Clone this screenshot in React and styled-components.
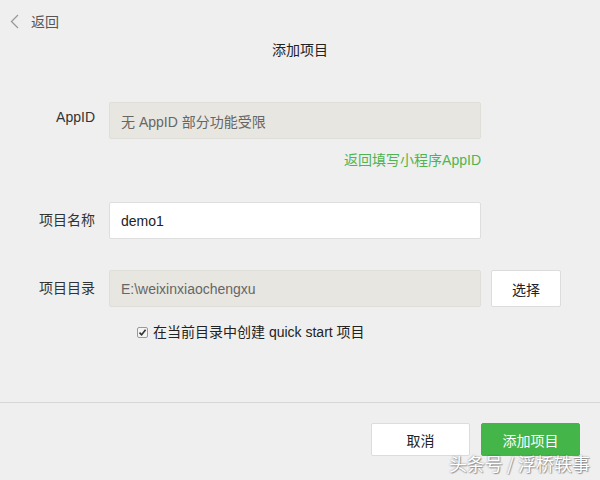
import React from 'react'
import styled, { createGlobalStyle } from 'styled-components'

const GlobalStyle = createGlobalStyle`
  html, body {
    margin: 0;
    padding: 0;
    background: #efefef;
  }
  body {
    font-family: "Liberation Sans", "Noto Sans CJK SC", sans-serif;
    font-size: 14px;
    color: #333;
  }
`

const Page = styled.div`
  position: relative;
  width: 600px;
  height: 480px;
  overflow: hidden;
  background: #efefef;
`

const BackLink = styled.div`
  display: flex;
  align-items: center;
  gap: 12px;
  padding: 11px 0 0 10px;
  height: 20px;
  color: #555;
  cursor: pointer;
`

const Title = styled.div`
  margin-top: 9px;
  line-height: 20px;
  text-align: center;
  color: #222;
`

const Form = styled.div`
  display: flex;
  flex-direction: column;
  margin-top: 42px;
`

const Row = styled.div`
  display: flex;
  align-items: flex-start;
  margin-top: ${(p) => p.$gap || 0}px;
`

const Label = styled.div`
  width: 95px;
  margin-right: 14px;
  padding-top: 7px;
  text-align: right;
  color: #333;
`

const Input = styled.div`
  box-sizing: border-box;
  width: 372px;
  height: 37px;
  padding: 0 11px;
  display: flex;
  align-items: center;
  border: 1px solid ${(p) => (p.$disabled ? '#e0ded9' : '#dedede')};
  border-radius: 2px;
  background: ${(p) => (p.$disabled ? '#e8e6e1' : '#fff')};
  color: ${(p) => (p.$disabled ? '#666' : '#222')};
  font-size: 14px;
`

const Hint = styled.div`
  width: 481px;
  margin-top: 11px;
  line-height: 20px;
  text-align: right;
  color: #4fb44f;
  cursor: pointer;
`

const Button = styled.div`
  box-sizing: border-box;
  width: ${(p) => p.$width || 99}px;
  height: ${(p) => p.$height || 33}px;
  margin-left: ${(p) => p.$offset || 0}px;
  display: flex;
  align-items: center;
  justify-content: center;
  border: 1px solid ${(p) => (p.$primary ? '#44b549' : '#dcdcdc')};
  border-radius: 2px;
  background: ${(p) => (p.$primary ? '#44b549' : '#fff')};
  color: ${(p) => (p.$primary ? '#fff' : '#222')};
  cursor: pointer;
`

const CheckRow = styled.label`
  display: flex;
  align-items: center;
  gap: 5px;
  margin: 15px 0 0 137px;
  line-height: 20px;
  color: #222;
`

const Box = styled.span`
  box-sizing: border-box;
  width: 11px;
  height: 11px;
  display: flex;
  align-items: center;
  justify-content: center;
  border: 1px solid #9a9a9a;
  border-radius: 2px;
  background: #f4f4f4;
`

const Footer = styled.div`
  position: absolute;
  left: 0;
  right: 0;
  top: 402px;
  display: flex;
  justify-content: flex-end;
  gap: 11px;
  padding: 20px 20px 0 0;
  border-top: 1px solid #d7d7d7;
`

const Watermark = styled.div`
  position: absolute;
  right: 10px;
  bottom: 4px;
  font-size: 18px;
  color: #fff;
  font-family: "Noto Sans CJK SC", sans-serif;
  text-shadow: 0 0 2px rgba(0, 0, 0, 0.45), 1px 1px 1px rgba(0, 0, 0, 0.3);
`

const Chevron = () => (
  <svg width="9" height="15" viewBox="0 0 9 15">
    <path d="M8 1 L1.5 7.5 L8 14" fill="none" stroke="#999" strokeWidth="1.3" />
  </svg>
)

const Check = () => (
  <svg width="9" height="9" viewBox="0 0 9 9">
    <path d="M1.5 4.6 L3.6 6.8 L7.6 1.8" fill="none" stroke="#333" strokeWidth="1.6" />
  </svg>
)

const App = () => {
  return (
    <Page>
      <GlobalStyle />
      <BackLink>
        <Chevron />
        <span>返回</span>
      </BackLink>
      <Title>添加项目</Title>
      <Form>
        <Row>
          <Label>AppID</Label>
          <Input $disabled>无 AppID 部分功能受限</Input>
        </Row>
        <Hint>返回填写小程序AppID</Hint>
        <Row $gap={32}>
          <Label>项目名称</Label>
          <Input>demo1</Input>
        </Row>
        <Row $gap={31}>
          <Label>项目目录</Label>
          <Input $disabled>E:\weixinxiaochengxu</Input>
          <Button $width={70} $height={37} $offset={10}>
            选择
          </Button>
        </Row>
        <CheckRow>
          <Box>
            <Check />
          </Box>
          在当前目录中创建 quick start 项目
        </CheckRow>
      </Form>
      <Footer>
        <Button>取消</Button>
        <Button $primary>添加项目</Button>
      </Footer>
      <Watermark>头条号 / 浮桥轶事</Watermark>
    </Page>
  )
}

export default App
